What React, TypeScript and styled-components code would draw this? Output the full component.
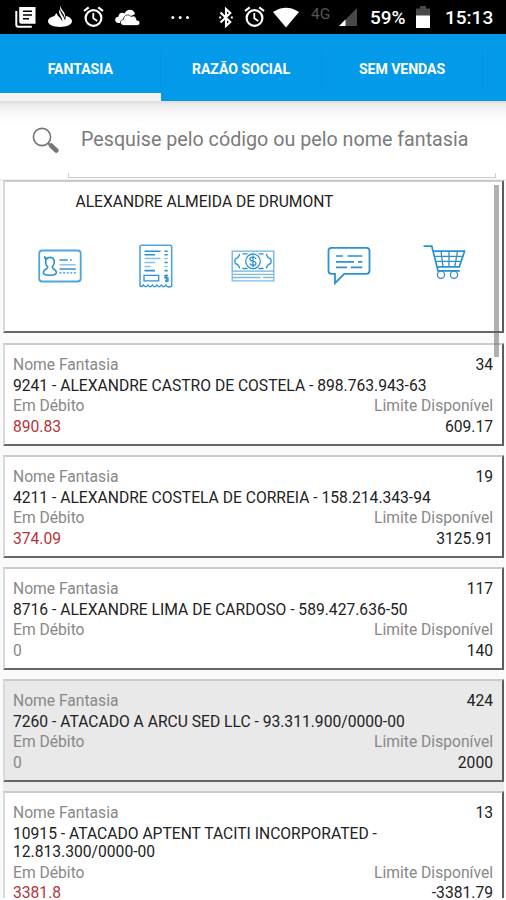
import React from "react";
import styled, { createGlobalStyle } from "styled-components";

const GlobalStyle = createGlobalStyle`
  * { box-sizing: border-box; }
  body { margin: 0; background: #fff; font-family: Roboto, "Liberation Sans", sans-serif; }
`;

const Screen = styled.div`
  width: 506px;
  height: 900px;
  overflow: hidden;
  display: flex;
  flex-direction: column;
  background: #fff;
`;

const StatusBar = styled.header`
  flex: none;
  height: 34px;
  background: #000;
  color: #fff;
  display: flex;
  align-items: center;
`;

const StatusIcon = styled.svg<{ $gap?: number }>`
  flex: none;
  display: block;
  margin-left: ${(p) => p.$gap ?? 0}px;
`;

const Network = styled.span`
  width: 22px;
  margin: -6px 0 0 12px;
  font-size: 15.5px;
  line-height: 18px;
  color: #555;
`;

const StatusText = styled.span<{ $gap: number; $width: number }>`
  margin-left: ${(p) => p.$gap}px;
  width: ${(p) => p.$width}px;
  font-size: 19px;
  font-weight: 500;
  line-height: 22px;
  margin-top: 2px;
  white-space: nowrap;
`;

const TabBar = styled.nav`
  flex: none;
  height: 67px;
  background: #039be9;
  display: flex;
  overflow: hidden;
`;

const Tab = styled.div<{ $active?: boolean }>`
  flex: none;
  width: ${(p) => (p.$active ? 160.5 : 161)}px;
  height: 67px;
  padding-top: 10px;
  border-bottom: 8px solid ${(p) => (p.$active ? "#f3f3f3" : "transparent")};
  display: flex;
  align-items: center;
  justify-content: center;
  color: #fff;
  font-size: 14.1px;
  font-weight: 700;
  letter-spacing: -0.05px;
  white-space: nowrap;
`;

const TabDivider = styled.i`
  flex: none;
  width: 1px;
  height: 38px;
  margin: 16px 0 0 -1px;
  background: #0892dc;
`;

const SearchBar = styled.div`
  flex: none;
  height: 78px;
  padding: 0 10px 0 32px;
  display: flex;
  background: linear-gradient(#dcdcdc 0, #ededed 4px, #f8f8f8 12px, #fff 22px);
`;

const SearchIcon = styled.svg`
  flex: none;
  margin: 25px 9px 0 0;
`;

const SearchField = styled.div`
  flex: 1;
  display: flex;
  flex-direction: column;
  justify-content: flex-end;
`;

const Placeholder = styled.span`
  padding-left: 13px;
  font-size: 19.7px;
  line-height: 24px;
  color: #7b7b7b;
  white-space: nowrap;
`;

const Underline = styled.i`
  height: 5px;
  margin: 21px 0 1px;
  border: 1px solid #c9c9c9;
  border-top: 0;
`;

const List = styled.main`
  position: relative;
  flex: none;
  height: 719px;
  overflow: hidden;
  padding: 1px 2px 0 3px;
  background: linear-gradient(#eee 0 2px, #fafafa 2px);
`;

const Card = styled.section<{ $selected?: boolean; $tall?: boolean }>`
  height: ${(p) => (p.$tall ? "153px" : "auto")};
  min-height: 103px;
  margin-bottom: ${(p) => (p.$tall ? 10 : 9)}px;
  padding: ${(p) => (p.$tall ? "11px 0 0 0" : "11px 9px 0 8px")};
  border-style: solid;
  border-width: 2px;
  border-color: #cbcbcb #5c5c5c #666 #d9d9d9;
  background: ${(p) => (p.$selected ? "#e9e9e9" : "#fff")};
  box-shadow: ${(p) => (p.$selected ? "0 9px 0 #ececec" : "none")};
`;

const Title = styled.h1`
  margin: 0 0 0 70.5px;
  font-size: 15.65px;
  font-weight: 400;
  line-height: 18.5px;
  letter-spacing: -0.03px;
  color: #222;
`;

const Actions = styled.div`
  display: flex;
  padding: 32px 0 0 7px;
`;

const Action = styled.button`
  width: 96.3px;
  padding: 0;
  border: 0;
  background: none;
  display: flex;
  justify-content: center;
`;

const Row = styled.div`
  display: flex;
  justify-content: space-between;
  margin-bottom: 2px;
  font-size: 15.65px;
  line-height: 18.5px;
`;

const Label = styled.span`
  color: #888;
`;

const Name = styled.span`
  white-space: nowrap;
  color: #222;
`;

const Value = styled.span<{ $tone?: "debt" | "muted" }>`
  color: ${(p) => (p.$tone === "debt" ? "#b5343a" : p.$tone === "muted" ? "#888" : "#222")};
`;

const Scrollbar = styled.i`
  position: absolute;
  top: 6px;
  right: 7px;
  width: 5px;
  height: 172px;
  background: rgba(90, 90, 90, 0.48);
`;

const AlarmIcon = ({ gap }: { gap: number }) => (
  <StatusIcon $gap={gap} width="21" height="22" viewBox="0 0 21 22" fill="none" stroke="#fff">
    <circle cx="10.5" cy="12" r="7.9" strokeWidth="2.2" />
    <path d="M1 5 5.7 1.3M20 5 15.3 1.3" strokeWidth="2.2" />
    <path d="M10.3 7v5.3l4 2.7" strokeWidth="1.8" />
  </StatusIcon>
);

const Line = ({ children }: { children: React.ReactNode }) => (
  <svg width="44" height="44" viewBox="0 0 44 44" fill="none" stroke="#2b91d2" strokeWidth="1.3">
    {children}
  </svg>
);

const IdCardIcon = () => (
  <Line>
    <rect x="1.2" y="6.5" width="41.5" height="31" rx="3" stroke="#4ea6dd" strokeWidth="1.8" />
    <path d="M6.3 12.5l2.6 2.3c2-2.4 7-1.7 7.4 2.4.3 3-1 4.7-2.1 5.8 0 2.5 4.2 2 4.2 5.5 0 1.8-1.8 2.7-6.4 2.7s-6.7-.9-6.7-2.7c0-3.3 4.5-3 4.5-5.5-1.8-1.8-2.7-4.3-1.8-7.2z" strokeWidth="1.6" />
    <path d="M21.5 16h8.3M32 16h1.7M21.5 25h16.3" strokeWidth="1.5" />
    <path d="M21.5 20.8h16.3" stroke="#7fbce6" />
    <path d="M21.5 28.8h16.3" strokeDasharray="2 1.6" />
  </Line>
);

const ReceiptIcon = () => (
  <Line>
    <path d="M6 42.5V3q0-1.7 1.7-1.7H36q1.7 0 1.7 1.7v39.5" stroke="#4ea6dd" strokeWidth="1.6" />
    <path d="M6 42.2q2.5 1 3.4-1.2 2.2 3.5 4.5 0 2.2 3.5 4.5 0 2.2 3.5 4.5 0 2.2 3.5 4.5 0 2.2 3.5 4.5 0 1.5 3.3 5.8 1.2" />
    <path d="M10.5 7.2h16M10.5 10.8h10.5M10.5 26.6H21M30.5 7.2h3.2M30.5 10.8h3.2M30.5 18.5h3.2M30.5 26.6h3.2" strokeWidth="1.6" />
    <path d="M10.5 14.5h16M10.5 18.5h10.5M10.5 22.5h6M30.5 14.5h3.2M30.5 22.5h3.2" stroke="#85bfe6" />
    <path d="M10 31.3h14.7v5.5H10zM34 31.5h-3V34h3v3h-3M32.5 30.5v8" />
  </Line>
);

const MoneyIcon = () => (
  <Line>
    <path d="M1.2 7.2h41.6v20H1.2z" stroke="#69b3e2" />
    <path d="M11.5 9.8h5M27.5 9.8h5M11.5 24.5h5M27.5 24.5h5M4 15q4-1 4.6-5.2M40 15q-4-1-4.6-5.2M4 19.5q4 1 4.6 5M40 19.5q-4 1-4.6 5M4 15v4.5M40 15v4.5" />
    <circle cx="22" cy="17.3" r="7.3" />
    <path d="M25 15q-.8-1.8-3-1.8c-4 0-4 3.5 0 4s4 4.2 0 4.2q-2.3 0-3-1.8M22 11.5v11.7" />
    <path d="M1.2 27v9.8h41.6V27M1.2 30.3h41.6M1.2 33.5h28.3M32 33.5h10.8" stroke="#7cbbe5" />
  </Line>
);

const ChatIcon = () => (
  <Line>
    <path d="M4.5 3.8h35q3 0 3 3v20q0 3-3 3H17.2L8 39.2v-9.4H4.5q-3 0-3-3v-20q0-3 3-3z" strokeWidth="1.8" />
    <path d="M9 12h7M20.5 12h14.8" stroke="#5aabdf" strokeWidth="1.8" />
    <path d="M9 17.8h18M31 17.8h4.3M9 23.3h11M23.8 23.3h11.5" strokeWidth="1.8" />
  </Line>
);

const CartIcon = () => (
  <Line>
    <path d="M.5 2.2h8.3L15 26.8h21.8" strokeWidth="1.7" />
    <path d="M10.3 7.2h31.3l-5.3 15.6H14.2" strokeWidth="1.7" />
    <path d="M11.5 12.3h28.3M13 17.3h25M18 7.2l2 15.6M26 7.2v15.6M34.5 7.2l-2.7 15.6" />
    <circle cx="18" cy="30.7" r="3.6" />
    <circle cx="31" cy="30.7" r="3.6" />
  </Line>
);

interface Client {
  code: string;
  name: React.ReactNode;
  debt: string;
  limit: string;
  selected?: boolean;
}

const clients: Client[] = [
  { code: "34", name: "9241 - ALEXANDRE CASTRO DE COSTELA - 898.763.943-63", debt: "890.83", limit: "609.17" },
  { code: "19", name: "4211 - ALEXANDRE COSTELA DE CORREIA - 158.214.343-94", debt: "374.09", limit: "3125.91" },
  { code: "117", name: "8716 - ALEXANDRE LIMA DE CARDOSO - 589.427.636-50", debt: "0", limit: "140" },
  { code: "424", name: "7260 - ATACADO A ARCU SED LLC - 93.311.900/0000-00", debt: "0", limit: "2000", selected: true },
  {
    code: "13",
    name: <>10915 - ATACADO APTENT TACITI INCORPORATED -<br />12.813.300/0000-00</>,
    debt: "3381.8",
    limit: "-3381.79",
  },
];

const ClientCard = ({ client }: { client: Client }) => (
  <Card $selected={client.selected}>
    <Row>
      <Label>Nome Fantasia</Label>
      <Value>{client.code}</Value>
    </Row>
    <Row>
      <Name>{client.name}</Name>
    </Row>
    <Row>
      <Label>Em Débito</Label>
      <Label>Limite Disponível</Label>
    </Row>
    <Row>
      <Value $tone={client.debt === "0" ? "muted" : "debt"}>{client.debt}</Value>
      <Value>{client.limit}</Value>
    </Row>
  </Card>
);

export default function App() {
  return (
    <Screen>
      <GlobalStyle />
      <StatusBar>
        <StatusIcon $gap={15} width="21" height="22" viewBox="0 0 21 22">
          <path d="M1.3 5v13.7q0 2 2 2h13.5" fill="none" stroke="#fff" strokeWidth="2" />
          <path d="M4.2 1h16.3v16.7H6.2q-2 0-2-2z" fill="#fff" />
          <path d="M8 5.2h9M8 9h9M8 12.8h6" stroke="#000" strokeWidth="1.5" />
        </StatusIcon>
        <StatusIcon $gap={12} width="24" height="22" viewBox="0 0 24 22">
          <path d="M6.5 10C2 11 0 13 0 15.3 0 18.7 5.3 21 12 21s12-2.3 12-5.7c0-2.4-2.500-4.600-6.300-5.500.2 1.700-.1 3-.9 4.500-.5-3.600-4.600-6.700-4.900-11-1.800 2.500-.3 5 1.100 7.400 1 1.700 1.600 3.200 1.300 4.500-1.600-3.600-5.200-5.200-5.800-8.200-1.100 1.300-1.500 2-2 3z" fill="#fff" />
          <path d="M12.6 0c-1.5 3.500 1 5 2.800 8.300.8 1.500 1.200 2.500 1 4 1.500-3.300.3-5-1.400-7.300C13.700 3.200 12.700 2 12.600 0z" fill="#fff" />
        </StatusIcon>
        <AlarmIcon gap={11} />
        <StatusIcon $gap={11} width="25" height="17" viewBox="0 0 25 17">
          <path d="M5 14H4C-1 14-1 8 3.5 7.7 3.3 4 7 2.6 9.5 4.5 11.5-.8 19-.5 20 5" fill="#fff" />
          <path d="M9 16.5c-4.500 0-4.800-5.800-.5-6C8.500 6 13.500 4.500 16 7.500c3-1.500 5.500 0 5.500 3.500 4.500 0 4.300 5.500.5 5.500z" fill="#fff" stroke="#000" strokeWidth=".7" />
        </StatusIcon>
        <StatusIcon $gap={31} width="20" height="5" viewBox="0 0 20 5" fill="#fff">
          <circle cx="1.8" cy="2.5" r="1.5" />
          <circle cx="9.2" cy="2.5" r="1.5" />
          <circle cx="16.5" cy="2.5" r="1.5" />
        </StatusIcon>
        <StatusIcon $gap={28} width="14" height="21" viewBox="0 0 14 21" fill="none" stroke="#fff" strokeWidth="2.1">
          <path d="M1.5 5.5 11.3 15 7 19V2l4.3 4L1.5 15.5" />
          <path d="M.2 10.5h2M11.8 10.5h2" />
        </StatusIcon>
        <AlarmIcon gap={11} />
        <StatusIcon $gap={8} width="26" height="21" viewBox="0 0 26 21">
          <path d="M0 5Q13-3.500 26 5L13 20.500z" fill="#fff" />
        </StatusIcon>
        <Network>4G</Network>
        <StatusIcon $gap={6} width="19" height="18" viewBox="0 0 19 18">
          <path d="M18 0v18H0z" fill="#494949" />
          <path d="M6.5 11.5V18H0z" fill="#fff" />
        </StatusIcon>
        <StatusText $gap={12} $width={38}>59%</StatusText>
        <StatusIcon $gap={8} width="14" height="22" viewBox="0 0 14 22">
          <path d="M4 0h6v2.5h4V10H0V2.500h4z" fill="#494949" />
          <path d="M0 9.5h14V22H0z" fill="#fff" />
        </StatusIcon>
        <StatusText $gap={15} $width={54}>15:13</StatusText>
      </StatusBar>
      <TabBar>
        <Tab $active>FANTASIA</Tab>
        <TabDivider />
        <Tab>RAZÃO SOCIAL</Tab>
        <TabDivider />
        <Tab>SEM VENDAS</Tab>
        <TabDivider />
      </TabBar>
      <SearchBar>
        <SearchIcon width="27" height="28" viewBox="0 0 27 28" fill="none" stroke="#777">
          <circle cx="10" cy="11" r="8.6" strokeWidth="1.6" />
          <path d="m16 17 3 3" strokeWidth="1.8" />
          <path d="m19 19.5 5.3 5" strokeWidth="4.6" strokeLinecap="round" />
        </SearchIcon>
        <SearchField>
          <Placeholder>Pesquise pelo código ou pelo nome fantasia</Placeholder>
          <Underline />
        </SearchField>
      </SearchBar>
      <List>
        <Card $tall>
          <Title>ALEXANDRE ALMEIDA DE DRUMONT</Title>
          <Actions>
            <Action aria-label="Cadastro"><IdCardIcon /></Action>
            <Action aria-label="Pedidos"><ReceiptIcon /></Action>
            <Action aria-label="Financeiro"><MoneyIcon /></Action>
            <Action aria-label="Mensagens"><ChatIcon /></Action>
            <Action aria-label="Carrinho"><CartIcon /></Action>
          </Actions>
        </Card>
        {clients.map((client) => (
          <ClientCard key={client.code} client={client} />
        ))}
        <Scrollbar />
      </List>
    </Screen>
  );
}
